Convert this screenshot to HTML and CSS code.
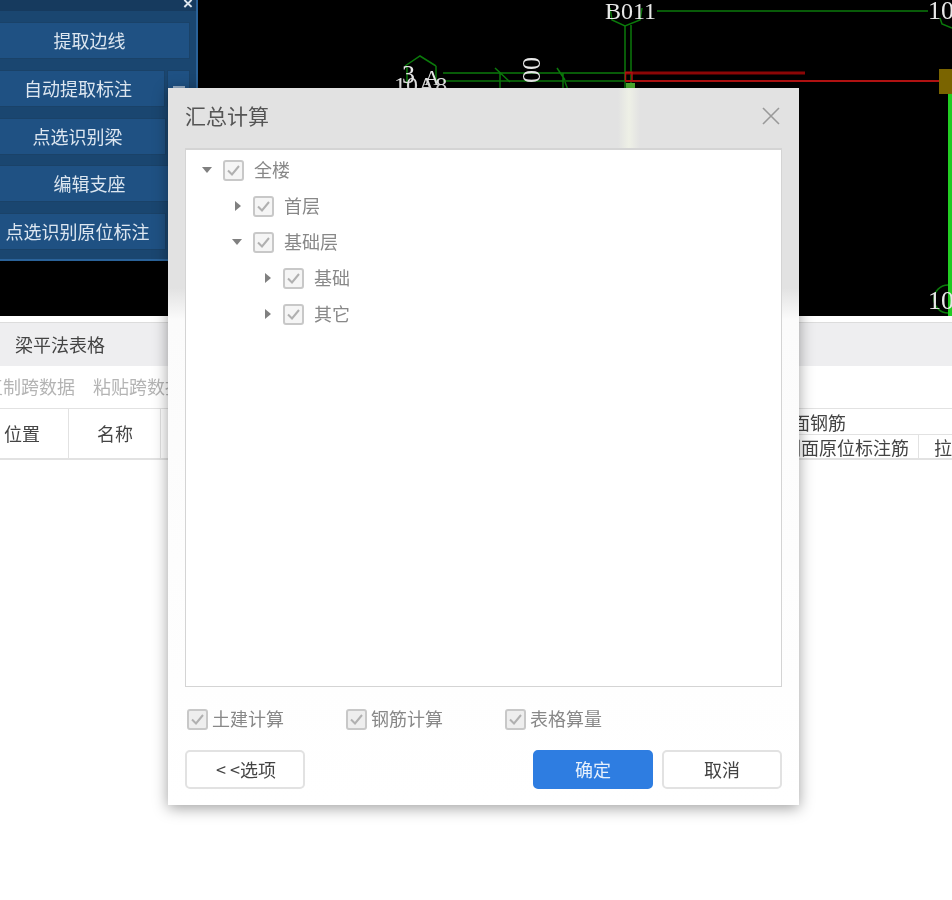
FILE: index.html
```html
<!DOCTYPE html>
<html lang="zh-CN">
<head>
<meta charset="utf-8">
<title>汇总计算</title>
<link rel="stylesheet" href="styles.css">
</head>
<body>
<div class="screen">
  <section class="cad">
    <svg class="drawing" width="952" height="316" viewBox="0 0 952 316" fill="none">
      <g stroke="#0b7a0b" stroke-width="1.5">
        <path d="M657 11H928M625 25V88M631 25V88M443 73H625M443 81H625"/>
        <path d="M610 8L612 20L625 26L640 20L642 8"/>
        <path d="M940 18L942 24L952 28"/>
        <path d="M405 66L420 56L436 66M407 66V84M436 66V84"/>
        <path d="M495 68L510 82M500 73V90M557 68L565 80M563 73V90M565 82L568 90"/>
        <circle cx="948" cy="299" r="14"/>
      </g>
      <path d="M625 73H805" stroke="#8b0606" stroke-width="3"/>
      <path d="M625 81H945" stroke="#b01212" stroke-width="2"/>
      <path d="M625.5 72.500H632V81H625.500Z" stroke="#b01212" stroke-width="1.500"/>
      <rect x="626" y="83" width="9" height="6" fill="#4caf30"/>
      <rect x="939" y="69" width="13" height="25" fill="#7a6400"/>
      <path d="M950 94V316" stroke="#22cc22" stroke-width="4"/>
      <g class="cad-text">
        <text x="605" y="19" class="cad-mid">B011</text>
        <text x="928" y="19">10</text>
        <text x="928" y="309">10</text>
        <text x="402" y="83">3</text>
        <text x="424" y="85" class="cad-narrow">A</text>
        <text x="394" y="93" class="cad-mid">10A8</text>
        <text x="0" y="0" transform="translate(523 57) rotate(90)">00</text>
      </g>
    </svg>
    <aside class="panel">
      <header class="panel-head"><span class="panel-close">×</span></header>
      <div class="panel-body">
        <div class="tool-row"><span class="tool">提取边线</span></div>
        <div class="tool-row row-split"><span class="tool">自动提取标注</span><span class="tool-more"><i></i></span></div>
        <div class="tool-row row-short"><span class="tool">点选识别梁</span></div>
        <div class="tool-row row-tight"><span class="tool">编辑支座</span></div>
        <div class="tool-row row-short"><span class="tool">点选识别原位标注</span></div>
      </div>
    </aside>
  </section>

  <section class="sheet">
    <div class="tabbar">梁平法表格</div>
    <div class="toolbar"><span>复制跨数据</span><span>粘贴跨数据</span></div>
    <div class="grid-head">
      <div class="col col-pos">位置</div>
      <div class="col col-name">名称</div>
      <div class="col col-mid"></div>
      <div class="col-group">
        <div class="group-title">侧面钢筋</div>
        <div class="group-cell">侧面原位标注筋</div>
      </div>
      <div class="col-group col-last">
        <div class="group-title"></div>
        <div class="group-cell">拉筋</div>
      </div>
    </div>
  </section>

  <div class="dialog">
    <i class="glass-strip"></i>
    <header class="dialog-title">
      <h1>汇总计算</h1>
      <svg class="close" width="18" height="18" viewBox="0 0 18 18"><path d="M1 1L17 17M17 1L1 17" stroke="#999" stroke-width="1.600"/></svg>
    </header>
    <div class="tree">
      <div class="node lvl0"><b class="arrow down"></b><span class="box"><svg viewBox="0 0 17 17"><path d="M3 8.500L7 12.500L14 4"/></svg></span><span class="label">全楼</span></div>
      <div class="node lvl1"><b class="arrow right"></b><span class="box"><svg viewBox="0 0 17 17"><path d="M3 8.500L7 12.500L14 4"/></svg></span><span class="label">首层</span></div>
      <div class="node lvl1"><b class="arrow down"></b><span class="box"><svg viewBox="0 0 17 17"><path d="M3 8.500L7 12.500L14 4"/></svg></span><span class="label">基础层</span></div>
      <div class="node lvl2"><b class="arrow right"></b><span class="box"><svg viewBox="0 0 17 17"><path d="M3 8.500L7 12.500L14 4"/></svg></span><span class="label">基础</span></div>
      <div class="node lvl2"><b class="arrow right"></b><span class="box"><svg viewBox="0 0 17 17"><path d="M3 8.500L7 12.500L14 4"/></svg></span><span class="label">其它</span></div>
    </div>
    <div class="options">
      <label class="opt"><span class="box"><svg viewBox="0 0 17 17"><path d="M3 8.500L7 12.500L14 4"/></svg></span>土建计算</label>
      <label class="opt"><span class="box"><svg viewBox="0 0 17 17"><path d="M3 8.500L7 12.500L14 4"/></svg></span>钢筋计算</label>
      <label class="opt"><span class="box"><svg viewBox="0 0 17 17"><path d="M3 8.500L7 12.500L14 4"/></svg></span>表格算量</label>
    </div>
    <footer class="actions">
      <button class="btn btn-back">&lt; &lt;选项</button>
      <span class="spacer"></span>
      <button class="btn primary">确定</button>
      <button class="btn">取消</button>
    </footer>
  </div>
</div>
</body>
</html>
```
FILE: styles.css
```css
* { box-sizing: border-box; }
html, body { margin: 0; padding: 0; background: #fff; }
body { width: 952px; height: 900px; overflow: hidden; }

.screen {
  position: relative;
  width: 952px;
  height: 900px;
  overflow: hidden;
  font: 18px/1.2 "Noto Sans CJK SC", "Noto Sans", sans-serif;
  color: #444;
  filter: blur(0.45px);
}

/* CAD canvas */
.cad { position: relative; height: 316px; background: #000; }
.drawing { position: absolute; left: 0; top: 0; }
.cad-text text { font: 26px "Liberation Serif", serif; fill: #e8e8e8; }
.cad-text .cad-mid { font-size: 24px; }
.cad-text .cad-narrow { font-size: 22px; }

/* Blue tool panel */
.panel {
  width: 198px;
  height: 261px;
  background: #1a4670;
  border-right: 2px solid #2a6299;
  border-bottom: 2px solid #2a6299;
  position: relative;
}
.panel-head { height: 11px; background: #163a5e; position: relative; }
.panel-close {
  position: absolute;
  right: 3px;
  top: -5px;
  color: #dfe7ef;
  font: 700 17px/18px "Liberation Sans", sans-serif;
}
.panel-body { display: flex; flex-direction: column; gap: 11px; padding: 11px 6px 0 0; }
.tool-row { display: flex; gap: 2px; height: 37px; }
.tool {
  flex: 1;
  display: flex;
  align-items: center;
  justify-content: center;
  background: #1f5183;
  border: 1px solid #1a4268;
  border-left: 0;
  color: #dce6f0;
  white-space: nowrap;
  padding-right: 10px;
}
.row-split .tool { padding-right: 8px; }
.row-short { margin-right: 24px; }
.row-tight { margin-top: -1px; }
.tool-more {
  width: 23px;
  background: #1f5183;
  border: 1px solid #1a4268;
  position: relative;
}
.tool-more i {
  position: absolute;
  left: 5px;
  top: 15px;
  width: 12px;
  height: 3px;
  background: #9ab0c8;
}

/* Lower sheet */
.sheet { height: 584px; background: #fff; padding-top: 6px; }
.tabbar {
  height: 44px;
  padding: 0 15px;
  display: flex;
  align-items: center;
  background: #eeeef0;
  border-top: 1px solid #dcdcdc;
}
.toolbar {
  height: 42px;
  margin-left: -15px;
  display: flex;
  gap: 18px;
  align-items: center;
  color: #b4b4b4;
  white-space: nowrap;
}
.grid-head {
  display: flex;
  height: 52px;
  border-top: 1px solid #e2e2e2;
  border-bottom: 2px solid #e2e2e2;
}
.col {
  flex: none;
  display: flex;
  align-items: center;
  justify-content: center;
  border-right: 1px solid #e2e2e2;
}
.col-pos { width: 69px; padding-right: 24px; }
.col-name { width: 92px; padding-left: 1px; }
.col-mid { width: 620px; }
.col-group { flex: none; width: 138px; white-space: nowrap; }
.group-title { height: 26px; text-indent: -7px; line-height: 27px; border-bottom: 1px solid #e2e2e2; }
.group-cell { height: 24px; padding-left: 2px; line-height: 25px; border-right: 1px solid #e2e2e2; }
.col-last { flex: 1; }
.col-last .group-cell { padding-left: 15px; border-right: 0; }

/* Dialog */
.dialog {
  position: absolute;
  left: 168px;
  top: 88px;
  width: 631px;
  height: 717px;
  display: flex;
  flex-direction: column;
  padding: 0 17px 16px;
  background: linear-gradient(#e2e2e2 0, #e2e2e2 200px, #fbfbfb 232px, #fff 100%);
  box-shadow: 0 3px 14px rgba(0, 0, 0, .38);
}
.glass-strip {
  position: absolute;
  left: 450px;
  top: 0;
  width: 22px;
  height: 60px;
  background: linear-gradient(90deg, transparent, #eef0e6 50%, transparent);
}
.dialog-title {
  position: relative;
  height: 60px;
  flex: none;
  display: flex;
  align-items: center;
  justify-content: space-between;
  padding-right: 2px;
}
.dialog-title h1 { margin: 0 0 4px; font-size: 21px; font-weight: 400; color: #555; }
.close { margin-top: -4px; }
.tree {
  position: relative;
  height: 539px;
  flex: none;
  padding: 2px 0 0 15px;
  background: #fff;
  border: 2px solid #d4d4d4;
  border-left-width: 1px;
  border-bottom-width: 1px;
  border-right-width: 1px;
  color: #888;
}
.node { display: flex; align-items: center; height: 36px; margin-left: 1px; }
.lvl1 { margin-left: 31px; }
.lvl2 { margin-left: 61px; }
.arrow { width: 21px; flex: none; display: flex; }
.arrow::before { content: ""; border-style: solid; border-color: transparent; }
.arrow.down::before { border-width: 6px 5px 0; border-top-color: #808080; }
.arrow.right::before { border-width: 5.500px 0 5.500px 6px; border-left-color: #808080; margin-left: 3px; }
.box {
  flex: none;
  width: 21px;
  height: 21px;
  background: #f5f5f5;
  border: 2px solid #c8c8c8;
  border-radius: 3px;
  display: block;
}
.box svg { display: block; width: 17px; height: 17px; fill: none; stroke: #b0b0b0; stroke-width: 2; }
.label { margin-left: 10px; }
.options { display: flex; margin-top: 22px; height: 20px; padding-left: 2px; color: #888; }
.opt { width: 159px; display: flex; align-items: center; gap: 4px; white-space: nowrap; }
.opt .box { background: #eee; }
.actions { display: flex; gap: 9px; margin-top: 21px; height: 39px; }
.spacer { flex: 1; }
.btn {
  width: 120px;
  height: 39px;
  padding: 0;
  border: 2px solid #e2e2e2;
  border-radius: 5px;
  background: #fff;
  color: #444;
  font: inherit;
}
.btn-back { padding-left: 2px; }
.btn.primary { background: #2e7de1; border-color: #2e7de1; color: #e6f0fc; }
```
